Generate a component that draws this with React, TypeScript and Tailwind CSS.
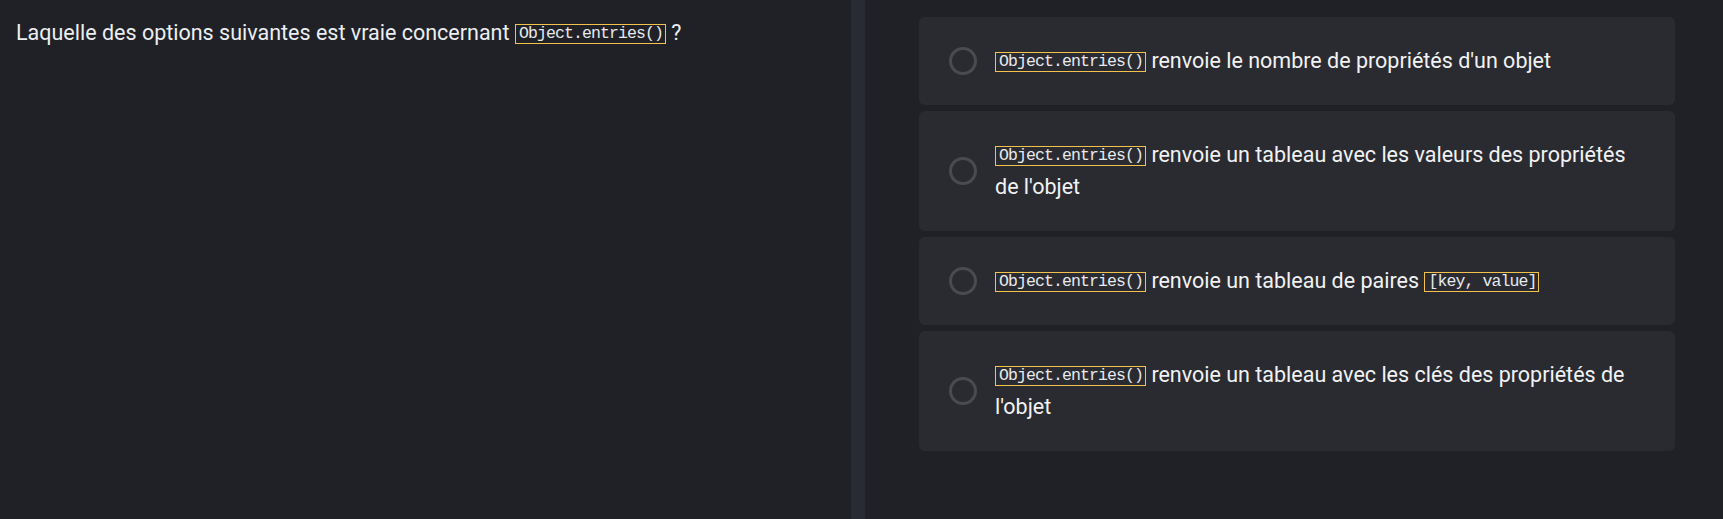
const options = [
  { id: "a", rest: "renvoie le nombre de propriétés d'un objet" },
  { id: "b", rest: "renvoie un tableau avec les valeurs des propriétés de l'objet" },
  { id: "c", rest: "renvoie un tableau de paires", code: "[key, value]" },
  { id: "d", rest: "renvoie un tableau avec les clés des propriétés de l'objet" },
];

const Code = ({ children }: { children: string }) => (
  <code className="inline-block border border-[#f2c14e] pl-[3px] pr-[2px] align-[2px] font-['Liberation_Mono',monospace] text-[16.5px] leading-[18px] tracking-[-0.9px] whitespace-pre text-[#e6e9ee]">
    {children}
  </code>
);

const App = () => {
  return (
    <div className="flex h-[519px] w-full bg-[#1f2126] font-['Roboto',sans-serif] text-[#eceef1]">
      <div className="w-[851px] shrink-0 pl-4 pt-[19px]">
        <p className="text-[21.5px] leading-7">
          Laquelle des options suivantes est vraie concernant{" "}
          <Code>Object.entries()</Code> ?
        </p>
      </div>

      <div className="w-[14px] shrink-0 bg-[#282b33]"></div>

      <div className="flex flex-1 flex-col gap-1.5 pl-[54px] pr-[48px] pt-[17px]">
        {options.map((opt) => (
          <div
            key={opt.id}
            className="flex items-center gap-[18px] rounded-md bg-[#2a2b30] py-7 pl-[30px] pr-[31px]"
          >
            <span className="h-7 w-7 shrink-0 rounded-full border-[3px] border-[#4a4b50]"></span>
            <p className="text-[21.5px] leading-8 text-[#f1f2f4]">
              <Code>Object.entries()</Code> {opt.rest}
              {opt.code && (
                <>
                  {" "}
                  <Code>{opt.code}</Code>
                </>
              )}
            </p>
          </div>
        ))}
      </div>
    </div>
  );
};

export default App;
